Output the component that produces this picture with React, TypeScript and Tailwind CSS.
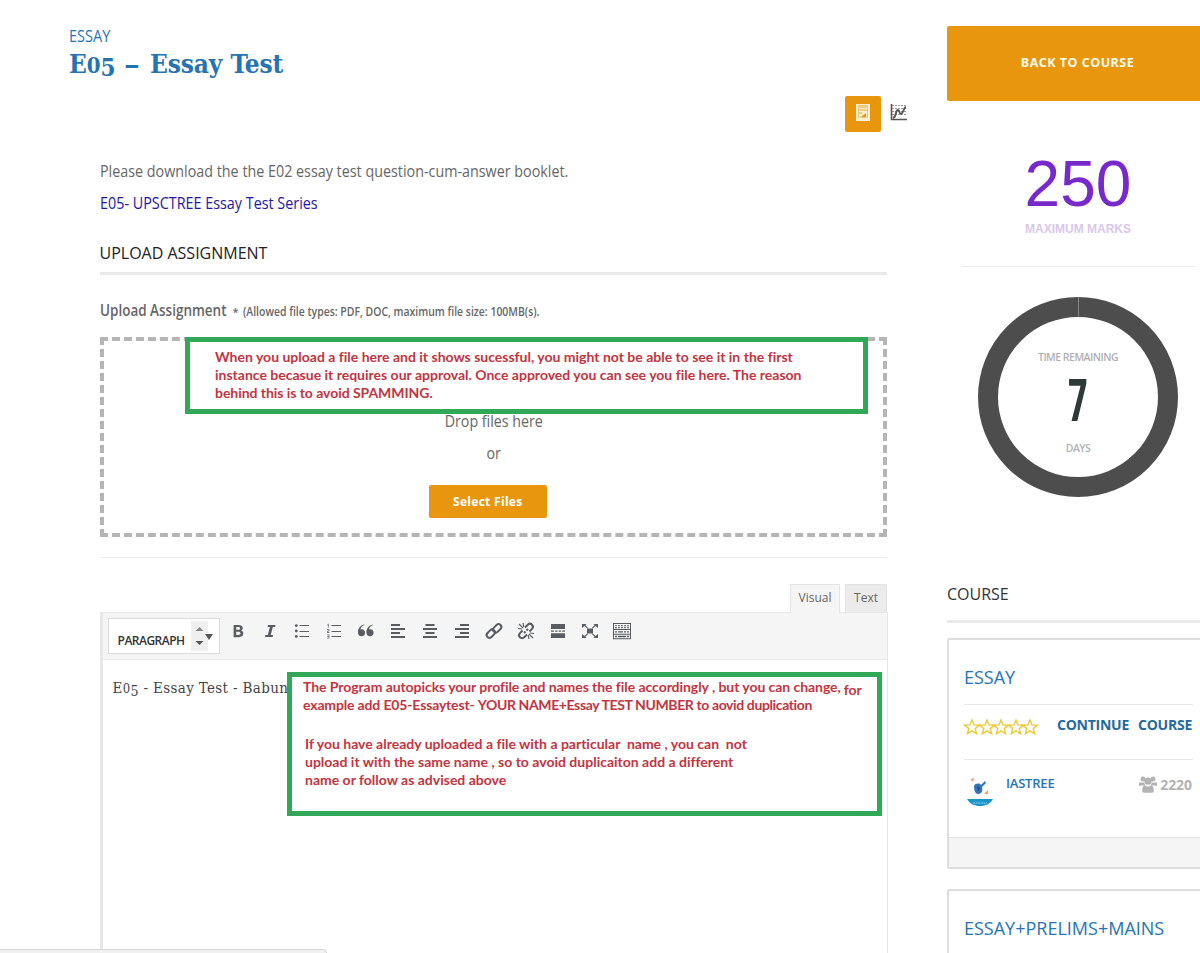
import type { ReactNode } from "react";

const body = "font-['Open_Sans',sans-serif]";

function Icon({ children }: { children: ReactNode }) {
  return (
    <span className="flex w-8 justify-center">
      <svg viewBox="0 0 20 20" className="h-5 w-5 fill-[#595d61]">{children}</svg>
    </span>
  );
}

const chain = (
  <>
    <rect x="10.4" y="2.6" width="5.6" height="9.4" rx="2.8" transform="rotate(45 13.2 7.3)" />
    <rect x="4" y="8" width="5.6" height="9.4" rx="2.8" transform="rotate(45 6.8 12.7)" />
  </>
);

function Toolbar() {
  return (
    <div className="flex pt-2">
      <Icon><path d="M5.6 4h4.6c3 0 4.6 1 4.6 3 0 1.400-.8 2.300-2 2.600 1.500.3 2.500 1.300 2.500 3 0 2.300-1.700 3.600-4.700 3.600H5.600zM8.200 6v2.800h1.700c1.400 0 2.200-.4 2.200-1.400S11.400 6 10 6zm0 4.700v3.300h1.900c1.500 0 2.400-.5 2.400-1.700 0-1.100-.8-1.600-2.400-1.600z" /></Icon>
      <Icon><path d="M8 4h7.500l-.4 1.900h-2.300l-2.100 8.200h2.300l-.4 1.900H5l.4-1.900h2.400l2.100-8.200H7.600z" /></Icon>
      <Icon>
        <circle cx="4.300" cy="4.600" r="1.400" /><circle cx="4.300" cy="10" r="1.400" /><circle cx="4.300" cy="15.400" r="1.400" />
        <path d="M7.500 4H17v1H7.500zM7.500 10H17v1H7.500zM7.500 15H17v1H7.500z" />
      </Icon>
      <Icon>
        <path opacity=".8" d="M3.200 3.400 4.800 2.600V6.400H3.900V3.900l-.7.3zM3 8.100h2.400v2.300H3.900v.7h1.500v.8H3V9.700h1.500v-.8H3zM3 13.400h2.400v4.200H3v-.8h1.500v-.9H3.400v-.8h1.100v-.9H3z" />
        <path d="M7.500 4H17v1H7.500zM7.500 10H17v1H7.500zM7.500 15H17v1H7.500z" />
      </Icon>
      <Icon>
        <path d="M8.500 4.100c-2.900 1-4 2.800-3.800 4.300.3-.2.700-.2 1-.2 1.900 0 3.400 1.500 3.400 3.500 0 2-1.500 3.600-3.500 3.600-2.400 0-3.700-1.900-3.700-4.400C1.900 7.300 4.500 4.100 8.100 3.400zM17 4.100c-2.900 1-4 2.800-3.800 4.300.3-.2.7-.2 1-.2 1.900 0 3.400 1.500 3.400 3.500 0 2-1.500 3.600-3.500 3.600-2.400 0-3.700-1.900-3.700-4.400 0-3.600 2.600-6.800 6.200-7.500z" />
      </Icon>
      <Icon><path d="M3 3h9v2H3zM3 7h14v2H3zM3 11h9v2H3zM3 15h14v2H3z" /></Icon>
      <Icon><path d="M5.500 3h9v2h-9zM3 7h14v2H3zM5.500 11h9v2h-9zM3 15h14v2H3z" /></Icon>
      <Icon><path d="M8 3h9v2H8zM3 7h14v2H3zM8 11h9v2H8zM3 15h14v2H3z" /></Icon>
      <Icon><g className="fill-none stroke-[#595d61] stroke-2">{chain}</g></Icon>
      <Icon>
        <g className="fill-none stroke-[#595d61] stroke-2">
          <path d="M9 6.500 11.800 3.700a2.900 2.900 0 0 1 4.200 4.200L13.500 10.500M11 13.500 8.200 16.300a2.900 2.900 0 0 1-4.200-4.200L6.500 9.500M8 10.500l1.500 1.500M10.500 8l1.500 1.500" />
          <path className="stroke-[1.200]" d="M2 7.500 6 8M3 3l4.200 4.200M7 2l.8 4M18 12.500l-4-.5M17 17l-4.200-4.200M13 18l-.8-4" />
        </g>
      </Icon>
      <Icon><path d="M3 3h14v5H3zM3 9.400h3v1.400H3zM7.200 9.400h2.400v1.400H7.200zM10.700 9.400h2.400v1.400h-2.400zM14.200 9.400H17v1.400h-2.800zM3 12.200h14V17H3z" /></Icon>
      <Icon>
        <path d="M7 7.500h6v5H7zM2 3h4.500L5.400 4.300l2.600 2.400-.8.8-2.700-2.400L2 7zM18 3h-4.500l1.100 1.300-2.600 2.400.8.8 2.700-2.400L18 7zM2 17h4.500l-1.100-1.300 2.600-2.400-.8-.8-2.700 2.400L2 13zM18 17h-4.500l1.100-1.300-2.600-2.400.8-.8 2.700 2.400L18 13z" />
      </Icon>
      <Icon>
        <path fillRule="evenodd" d="M1 2h18v16.200H1zM2 3v5h16V3zM2 9v3.800h16V9zM2 13.800v3.400h16v-3.400z" />
        <path d="M3 4.200h2v1H3zM6 4.200h2v1H6zM9 4.200h2v1H9zM12 4.200h2v1h-2zM15 4.200h2v1h-2zM3 6.200h2v1H3zM6 6.200h2v1H6zM9 6.200h2v1H9zM12 6.200h2v1h-2zM15 6.200h2v1h-2zM3 10.200h2v1.400H3zM6 10.200h5v1.400H6zM12 10.200h2v1.400h-2zM15 10.200h2v1.400h-2zM3 14.800h2v1.400H3zM6 14.800h8v1.400H6zM15 14.800h2v1.400h-2z" />
      </Icon>
    </div>
  );
}

function Star() {
  return (
    <svg viewBox="0 0 18 18" className="-mr-[3.500px] h-[18px] w-[18px] shrink-0 fill-none stroke-[#ecc935] stroke-[1.400]">
      <path d="m9 2 2 4.900 5.300.3-4.100 3.400 1.400 5.200L9 12.900l-4.600 2.900 1.400-5.200L1.700 7.200 7 6.900z" />
    </svg>
  );
}

function Main() {
  return (
    <main className="flex w-[947px] shrink-0 flex-col">
      <header className="h-[96px] pt-[25px] pl-[69px] text-[#2573b3]">
        <p className="h-[21px] origin-left scale-x-[.91] text-[16px] leading-[22px]">ESSAY</p>
        <h1 className="h-9 whitespace-nowrap font-['DejaVu_Serif_Condensed','DejaVu_Serif',serif] text-[26px] leading-9 font-bold tracking-[-0.100px] [font-stretch:75%]">
          E<span className="text-[22px]">0</span><span className="inline-block translate-y-[3px] text-[24px]">5</span><span className="mr-[12px] ml-[11px] inline-block scale-x-[1.350]">–</span>Essay Test
        </h1>
      </header>
      <div className="flex h-[59px] items-start pl-[845px]">
        <div className="flex h-9 w-9 items-start justify-center rounded-[2px] bg-[#e9960f] pt-2">
          <svg viewBox="0 0 16 17" className="h-[17px] w-4">
            <path d="M1 0h14v17H1z" fill="#fdf0c8" />
            <path d="M4 3h8M4 6h8M4 9h3" stroke="#dca850" />
            <path d="M3.500 1.500h9v12h-9z" fill="none" stroke="#efc87c" />
            <path d="m6 13 5-4v4z" fill="#d8962b" />
          </svg>
        </div>
        <svg viewBox="0 0 18 18" className="mt-[7px] ml-[9px] h-[18px] w-[18px] fill-none">
          <path d="M2 2.500h15M2 5.500h15M2 8.500h15M2 11.500h15" stroke="#999" strokeDasharray="2 1" />
          <path d="M1.500 1v15.500H17" stroke="#555" strokeWidth="1.600" />
          <path d="M3 15c4-1 2-8 5-8 2 0 1 4 3 4s3-7 5-7" stroke="#555" strokeWidth="1.900" />
        </svg>
      </div>
      <div className="ml-[99.500px] w-[787.500px] text-[#666]">
        <p className="h-8 origin-left scale-x-[.895] whitespace-nowrap text-[16px] leading-8">Please download the the E02 essay test question-cum-answer booklet.</p>
        <p className="h-8 origin-left scale-x-[.897] text-[16px] leading-8 text-[#2516a5]">E05- UPSCTREE Essay Test Series</p>
        <h2 className="mt-5 h-[36px] border-b-[3px] border-[#e9e9e9] text-[16px] leading-[29px] text-[#222]">UPLOAD ASSIGNMENT</h2>
        <p className="mt-[19px] flex h-8 items-baseline whitespace-nowrap leading-8 font-semibold">
          <span className="w-[129px] origin-left scale-x-[.870] text-[15.500px]">Upload Assignment</span>
          <span className="ml-1 text-[11px]">*</span>
          <span className="ml-1 origin-left scale-x-[.870] text-[12px]">(Allowed file types: PDF, DOC, maximum file size: 100MB(s).</span>
        </p>
        <div className="mt-[11px] h-[200px] border-4 border-dashed border-[#b5b5b5] pt-[64px] text-center text-[16px]">
          <p className="h-8 scale-x-[.890] leading-8">Drop files here</p>
          <p className="h-8 scale-x-[.890] leading-8">or</p>
          <button className="mt-4 mr-[11px] block h-[33px] w-[118px] justify-self-center rounded-[2px] bg-[#e9960f] text-[12px] font-bold tracking-[0.300px] text-white">Select Files</button>
        </div>
        <hr className="mt-5 border-[#ececec]" />
        <div className="mt-[26px] flex h-7 justify-end gap-[5px] text-center text-[12px]">
          <span className="relative z-10 -mb-px h-[29px] w-[50px] border border-b-0 border-[#e5e5e5] bg-[#f5f5f5] leading-[26px]">Visual</span>
          <span className="w-[42px] border border-b-0 border-[#e2e2e2] bg-[#ebebeb] leading-[26px]">Text</span>
        </div>
        <div className="h-[341px] w-[788px] border border-l-[3px] border-b-0 border-[#e7e7e7]">
          <div className="flex h-[47px] border-b border-[#e9e9e9] bg-[#f5f5f5] pl-[5px]">
            <div className="mt-[5px] mr-0.5 flex h-9 w-28 border border-[#dcdcdc] bg-white pl-[9px] text-[12px] font-semibold text-[#333]">
              <span className="w-[73px] pt-[13px] leading-[18px] tracking-[-0.500px]">PARAGRAPH</span>
              <svg viewBox="0 0 28 34" className="h-[34px] w-7 fill-[#555]">
                <path d="M0 2h17v30H0z" fill="#efefef" />
                <path d="m4.500 12 4-4 4 4z" fill="#888" /><path d="m4.500 22 4 4 4-4zM14 15h8l-4 6z" />
              </svg>
            </div>
            <Toolbar />
          </div>
          <p className="pt-4 pl-[10px] font-['DejaVu_Serif_Condensed','DejaVu_Serif',serif] text-[15px] leading-6 tracking-[0.350px] whitespace-nowrap text-[#444] [font-stretch:75%]">
            E<span className="text-[13px]">0</span><span className="inline-block translate-y-[3px] text-[14px]">5</span> - Essay Test - Babun
          </p>
        </div>
      </div>
    </main>
  );
}

function Sidebar() {
  return (
    <aside className="w-[270px] shrink-0 pt-[26px]">
      <button className="block h-[75px] w-full rounded-[2px] bg-[#e9960f] pr-[9px] text-[12.500px] font-bold tracking-[0.500px] text-[#fffbe8]">BACK TO COURSE</button>
      <section className="ml-[15px] flex h-[166px] w-[234px] flex-col items-center border-b border-[#eaeaea] pt-[48px] pr-[2px] font-['Liberation_Sans',Arial,sans-serif]">
        <p className="h-[70px] text-[64px] leading-[70px] text-[#7829cc]">250</p>
        <p className="h-5 text-[12px] leading-5 font-bold text-[#d8c8ec]">MAXIMUM MARKS</p>
      </section>
      <section className="mt-[30px] ml-[31px] flex h-[200px] w-[200px] flex-col items-center rounded-full border-20 border-[#4d4d4d] text-[#b0b0b0]">
        <span className="-mt-5 h-5 w-px bg-[#858585]" />
        <p className="mt-[30px] h-5 text-[10.500px] leading-5 font-semibold tracking-[-0.500px] whitespace-nowrap">TIME REMAINING</p>
        <p className="mt-[2px] h-[60px] origin-center scale-x-[.68] font-['Roboto',sans-serif] text-[59px] leading-[64px] font-bold text-[#2f3938] [font-stretch:75%]">7</p>
        <p className="mt-[9px] h-5 text-[10.500px] leading-5 font-semibold tracking-[-0.500px]">DAYS</p>
      </section>
      <h3 className="mt-[80px] h-[46px] border-b-[3px] border-[#e9e9e9] text-[16px] leading-[34px] text-[#333]">COURSE</h3>
      <article className="mt-[15px] h-[231px] rounded-[2px] border-2 border-[#dedede]">
        <div className="h-[197px] pl-[15px]">
          <div className="w-[229px]">
            <h4 className="h-[65px] border-b border-[#e6e6e6] pt-[23px] text-[18px] leading-[28px] text-[#2573b9]">ESSAY</h4>
            <div className="flex h-[55px] justify-between border-b border-[#e6e6e6] pt-[6px]">
              <div className="-ml-px flex pt-[7px]"><Star /><Star /><Star /><Star /><Star /></div>
              <p className="text-[14px] leading-7 font-bold tracking-[-0.250px] text-[#246a9f]"><span>CONTINUE</span><span className="mr-px ml-[9px]">COURSE</span></p>
            </div>
            <div className="flex pt-3 text-[14px] font-semibold">
              <svg viewBox="0 0 32 36" className="mt-px h-9 w-8">
                <path d="m7 6 4-1-3 4zM20 21l4-4v4z" fill="#e79b6d" />
                <path d="M10 13c1-3 6-3 7-1l4-4 1 2-4 4c1 5-1 7-4 7s-4-4-4-8z" fill="#3475b8" />
                <path d="m13 13 3 2-2 3z" fill="#1c4c8c" />
                <path d="M3 26h26c-3 5-7 7-13 7S6 31 3 26z" fill="#1b96ca" />
                <path d="M9 30h14" stroke="#8dd0eb" strokeDasharray="2 .6" />
              </svg>
              <span className="ml-[10px] text-[13px] leading-[22px] tracking-[-0.200px] text-[#2573b9]">IASTREE</span>
              <span className="mr-px ml-auto flex h-6 items-center gap-[3px] text-[#b3b3b3]">
                <svg viewBox="0 0 18 17" className="h-[17px] w-[18px] fill-current">
                  <circle cx="4" cy="3" r="2.500" /><circle cx="14" cy="3" r="2.500" /><circle cx="9" cy="5.200" r="3.600" />
                  <path d="M0 9V6.500h5.200a5 5 0 0 0 1.300 3H2.500C1 10 0 10 0 9zM18 9V6.500h-5.200a5 5 0 0 1-1.300 3h4c1.500.5 2.500.5 2.500-.5zM3.200 14.500c0-3 .8-5 2.800-5 2 1.200 4 1.200 6 0 2 0 2.800 2 2.800 5 0 1.500-1 2.300-2.300 2.300h-7c-1.300 0-2.300-.8-2.300-2.300z" />
                </svg>
                <span className="font-bold tracking-[-0.050px]">2220</span>
              </span>
            </div>
          </div>
        </div>
        <div className="h-[30px] border-t border-[#e2e2e2] bg-[#f5f5f5]" />
      </article>
      <article className="mt-[20px] h-[100px] rounded-[2px] border-2 border-[#dedede] pt-[23px] pl-[15px]">
        <h4 className="text-[18px] leading-[28px] text-[#2573b9]">ESSAY+PRELIMS+MAINS</h4>
      </article>
    </aside>
  );
}

const note = "absolute z-20 border-5 border-[#30a857] bg-white font-['Lato',sans-serif] text-[14px] font-bold leading-[18px] text-[#c3343f] whitespace-pre [font-variant-ligatures:none]";

export default function App() {
  return (
    <div className={`relative flex h-[953px] w-[1200px] overflow-hidden bg-white ${body}`}>
      <Main />
      <Sidebar />
      <div className={`${note} top-[337px] left-[185px] h-[77px] w-[683px] pt-[6px] pl-[25px]`}>
        <p>When you upload a file here and it shows sucessful, you might not be able to see it in the first</p>
        <p>instance becasue it requires our approval. Once approved you can see you file here. The reason</p>
        <p className="tracking-[-0.050px]">behind this is to avoid SPAMMING.</p>
      </div>
      <div className={`${note} top-[672px] left-[287px] h-[144px] w-[595px] pt-[1px] pl-[11px]`}>
        <p className="flex"><span className="tracking-[-0.060px]">The Program autopicks your profile and names the file accordingly , but you can change,</span><span className="ml-[3px] translate-y-[3px]">for</span></p>
        <p className="flex tracking-[-0.150px]"><span>example add E05-Essaytest- </span><span className="tracking-[-0.380px]">YOUR NAME+Essay TEST NUMBER to aovid duplication</span></p>
        <div className="mt-[21px] pl-[2px]">
          <p>If you have already uploaded a file with a particular  name , you can  not</p>
          <p>upload it with the same name , so to avoid duplicaiton add a different</p>
          <p>name or follow as advised above</p>
        </div>
      </div>
      <div className="absolute bottom-0 left-0 z-20 h-1 w-[327px] rounded-tr-[4px] border-t border-r border-[#d5d5d5] bg-[#f1f1f1]" />
    </div>
  );
}
